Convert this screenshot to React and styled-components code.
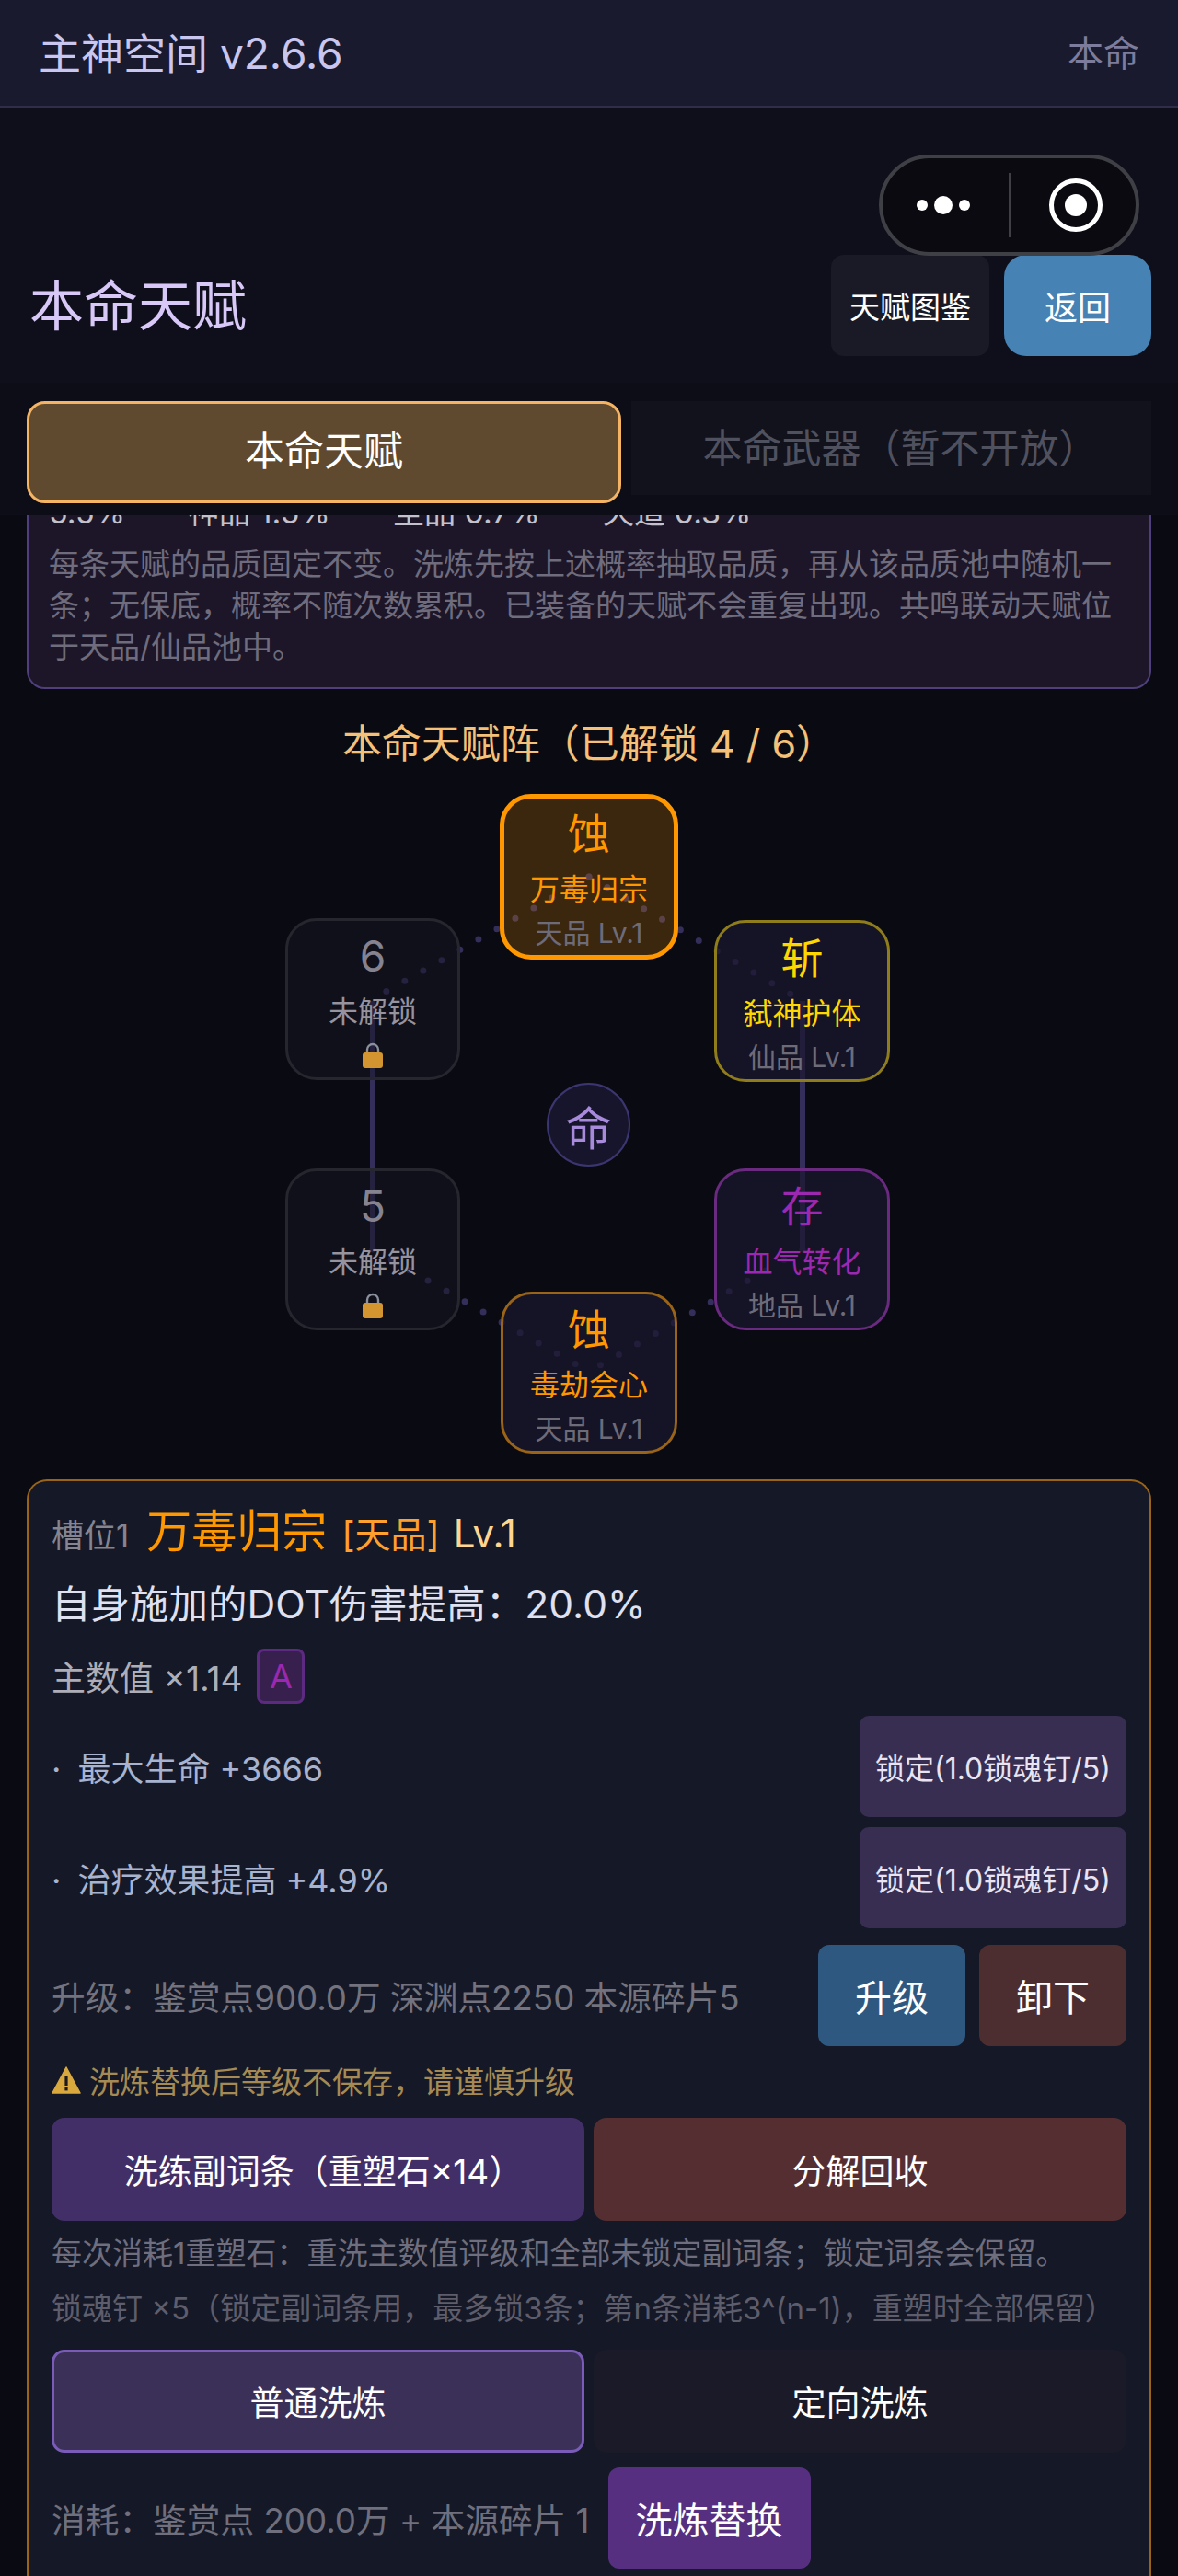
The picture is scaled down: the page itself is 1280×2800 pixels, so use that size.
import React from "react";
import styled, { createGlobalStyle } from "styled-components";

const GlobalStyle = createGlobalStyle`
  html, body {
    margin: 0;
    padding: 0;
    background: #0a0a12;
  }
  * {
    box-sizing: border-box;
  }
`;

const Page = styled.div`
  position: relative;
  height: 2800px;
  overflow: hidden;
  background: #0a0a12;
  font-family: "Inter", "Noto Sans CJK SC", sans-serif;
  font-weight: 400;
`;

const TopBar = styled.header`
  display: flex;
  align-items: center;
  justify-content: space-between;
  height: 117px;
  padding: 0 42px 6px;
  background: #1a1a2e;
  border-bottom: 2px solid #2f2d4a;
`;

const AppName = styled.div`
  font-size: 46px;
  color: #c9c6f0;
`;

const PageTag = styled.div`
  font-size: 39px;
  color: #7d7c9c;
`;

const Hero = styled.div`
  background: #0e0f1b;
  padding: 160px 29px 29px;
`;

const TitleRow = styled.div`
  display: flex;
  align-items: center;
  justify-content: space-between;
`;

const Title = styled.h1`
  margin: 0 0 8px 3px;
  font-size: 59px;
  font-weight: 400;
  color: #d8c8f8;
`;

const TitleActions = styled.div`
  display: flex;
  gap: 16px;
`;

const HeadButton = styled.button`
  width: ${(p) => (p.$primary ? "160px" : "172px")};
  height: 110px;
  padding: 0;
  border: none;
  border-radius: ${(p) => (p.$primary ? "24px" : "14px")};
  background: ${(p) => (p.$primary ? "#4682b4" : "#1a1a26")};
  color: #fff;
  font-family: inherit;
  font-size: ${(p) => (p.$primary ? "36px" : "33px")};
`;

const Capsule = styled.div`
  position: absolute;
  top: 168px;
  left: 955px;
  width: 283px;
  height: 110px;
`;

const TabBar = styled.div`
  position: relative;
  z-index: 2;
  display: flex;
  align-items: flex-start;
  gap: 11px;
  height: 144px;
  padding: 20px 29px 0;
  background: #0c0d16;
`;

const Tab = styled.div`
  flex: ${(p) => (p.$active ? "0 0 646px" : "1")};
  height: ${(p) => (p.$active ? "111px" : "102px")};
  padding: ${(p) => (p.$active ? "0 0 10px" : "0 0 6px 20px")};
  display: flex;
  align-items: center;
  justify-content: center;
  border: ${(p) => (p.$active ? "3px solid #f5b463" : "none")};
  border-radius: ${(p) => (p.$active ? "20px" : "0")};
  background: ${(p) => (p.$active ? "#5f4a30" : "#11121c")};
  color: ${(p) => (p.$active ? "#fff" : "#50515f")};
  font-size: 43px;
`;

const InfoPanel = styled.section`
  margin: -40px 29px 0;
  padding: 12px 22px 0;
  height: 229px;
  background: #1c1628;
  border: 2px solid #4f3f7c;
  border-radius: 0 0 20px 20px;
`;

const RateRow = styled.div`
  display: flex;
  gap: 68px;
  margin-bottom: 11px;
  font-size: 34px;
  line-height: 46px;
  color: #c3c2cc;
`;

const InfoText = styled.p`
  margin: 0;
  font-size: 33px;
  line-height: 45px;
  color: #6f6c7e;
`;

const FormationTitle = styled.h2`
  margin: 34px 0 0;
  height: 50px;
  line-height: 50px;
  text-align: center;
  font-size: 43px;
  font-weight: 400;
  color: #f5c078;
`;

const Formation = styled.div`
  position: relative;
  margin-top: 3px;
  height: 744px;
`;

const Links = styled.svg`
  position: absolute;
  inset: 0;
`;

const Slot = styled.div`
  position: absolute;
  left: ${(p) => p.$x}px;
  top: ${(p) => p.$y}px;
  width: ${(p) => p.$w}px;
  height: ${(p) => p.$h}px;
  display: flex;
  flex-direction: column;
  align-items: center;
  border: ${(p) => p.$bw}px solid ${(p) => p.$border};
  border-radius: 34px;
  background: ${(p) => p.$bg};
  color: ${(p) => p.$color};
`;

const SlotGlyph = styled.div`
  font-size: 46px;
  line-height: 66px;
  margin-top: 5px;
`;

const SlotName = styled.div`
  font-size: 32px;
  line-height: 44px;
  margin-top: 6px;
`;

const SlotGrade = styled.div`
  font-size: 30px;
  line-height: 44px;
  margin-top: 3px;
  color: #6e6b79;
`;

const LockedGlyph = styled(SlotGlyph)`
  color: #85838f;
`;

const LockedName = styled(SlotName)`
  color: #96939f;
  margin-bottom: 11px;
`;

const CoreBadge = styled.div`
  position: absolute;
  left: 594px;
  top: 341px;
  width: 91px;
  height: 91px;
  display: flex;
  align-items: center;
  justify-content: center;
  border: 2px solid #3b3670;
  border-radius: 50%;
  background: #17152b;
  color: #a78bda;
  font-size: 50px;
`;

const DetailCard = styled.section`
  margin: 28px 29px 0;
  height: 1300px;
  padding: 24px 25px 0;
  background: #151826;
  border: 2px solid #9a6418;
  border-bottom: none;
  border-radius: 22px 22px 0 0;
`;

const NameRow = styled.div`
  display: flex;
  align-items: baseline;
  height: 62px;
  line-height: 62px;
`;

const SlotLabel = styled.span`
  font-size: 35px;
  color: #85858f;
  margin-right: 19px;
`;

const TalentName = styled.span`
  font-size: 49px;
  color: #ff9800;
  margin-right: 16px;
`;

const GradeTag = styled.span`
  font-size: 39px;
  color: #ff9f2e;
  margin-right: 15px;
`;

const LevelTag = styled.span`
  font-size: 42px;
  color: #ffd591;
`;

const Effect = styled.div`
  margin-top: 20px;
  height: 56px;
  line-height: 56px;
  font-size: 42.5px;
  color: #dfe0f0;
`;

const MultiplierRow = styled.div`
  display: flex;
  align-items: center;
  gap: 16px;
  margin-top: 20px;
  height: 60px;
  font-size: 37px;
  color: #aeaeb8;
`;

const RankBadge = styled.span`
  display: flex;
  align-items: center;
  justify-content: center;
  width: 52px;
  height: 60px;
  border: 3px solid #5c2a80;
  border-radius: 8px;
  background: #37204e;
  color: #9c27b0;
  font-size: 36px;
`;

const AffixList = styled.div`
  display: flex;
  flex-direction: column;
  gap: 11px;
  margin-top: 13px;
`;

const AffixRow = styled.div`
  display: flex;
  align-items: center;
  justify-content: space-between;
  font-size: 36px;
  color: #a8b3cf;
`;

const AffixDot = styled.span`
  margin-right: 18px;
`;

const LockButton = styled.button`
  width: 290px;
  height: 110px;
  padding: 0;
  border: none;
  border-radius: 10px;
  background: #372e52;
  color: #e8e4f2;
  font-family: inherit;
  font-size: 32px;
`;

const UpgradeRow = styled.div`
  display: flex;
  align-items: center;
  gap: 15px;
  margin-top: 18px;
`;

const MutedLine = styled.div`
  flex: 1;
  font-size: 36.7px;
  color: #73737f;
`;

const SmallAction = styled.button`
  width: 160px;
  height: 110px;
  padding: 0;
  border: none;
  border-radius: 12px;
  background: ${(p) => p.$bg};
  color: #fff;
  font-family: inherit;
  font-size: 40px;
`;

const Warning = styled.div`
  display: flex;
  align-items: center;
  gap: 9px;
  margin-top: 14px;
  height: 46px;
  font-size: 33px;
  color: #a68a54;
`;

const ButtonPair = styled.div`
  display: grid;
  grid-template-columns: 1fr 1fr;
  gap: 10px;
  margin-top: ${(p) => p.$top}px;
`;

const WideButton = styled.button`
  height: 112px;
  padding: ${(p) => (p.$offset ? "0 0 0 12px" : "0")};
  border: ${(p) => (p.$outlined ? "3px solid #7a5cb8" : "none")};
  border-radius: 14px;
  background: ${(p) => p.$bg};
  color: #fff;
  font-family: inherit;
  font-size: 37px;
`;

const Note = styled.p`
  margin: ${(p) => p.$top}px 0 0;
  height: 46px;
  line-height: 46px;
  font-size: 33px;
  white-space: nowrap;
  color: ${(p) => p.$color};
`;

const CostRow = styled.div`
  display: flex;
  align-items: center;
  gap: 20px;
  margin-top: 16px;
  font-size: 36.7px;
  color: #6f6f7d;
`;

const RerollButton = styled.button`
  width: 220px;
  height: 110px;
  padding: 0;
  border: none;
  border-radius: 12px;
  background: #562f80;
  color: #fff;
  font-family: inherit;
  font-size: 40px;
`;

const LockIcon = () => (
  <svg width="24" height="28" viewBox="0 0 24 28">
    <path d="M6 12V8a6 6 0 0 1 12 0v4" fill="none" stroke="#8b919c" strokeWidth="2.4" />
    <rect x="1" y="11" width="22" height="17" rx="3" fill="#d3952f" />
  </svg>
);

const WarnIcon = () => (
  <svg width="32" height="30" viewBox="0 0 32 30">
    <path d="M16 1 L31 29 H1 Z" fill="#d9a93e" stroke="#d9a93e" strokeWidth="1.5" strokeLinejoin="round" />
    <rect x="14.4" y="10" width="3.2" height="11" fill="#1a1a20" />
    <rect x="14.4" y="23" width="3.2" height="3.4" fill="#1a1a20" />
  </svg>
);

const slots = [
  { x: 543, y: 27, w: 194, h: 180, bw: 5, border: "#ff9800", bg: "rgba(255,152,0,0.2)", color: "#ff9800", glyph: "蚀", name: "万毒归宗", grade: "天品 Lv.1" },
  { x: 776, y: 164, w: 191, h: 176, bw: 3, border: "#8f7d1c", bg: "rgba(26,24,46,0.72)", color: "#ffd700", glyph: "斩", name: "弑神护体", grade: "仙品 Lv.1" },
  { x: 776, y: 434, w: 191, h: 176, bw: 3, border: "#6a2a80", bg: "rgba(26,24,46,0.72)", color: "#9c27b0", glyph: "存", name: "血气转化", grade: "地品 Lv.1" },
  { x: 544, y: 568, w: 192, h: 176, bw: 3, border: "#9a6418", bg: "rgba(26,24,46,0.72)", color: "#ff9800", glyph: "蚀", name: "毒劫会心", grade: "天品 Lv.1" },
];

const lockedSlots = [
  { x: 310, y: 434, n: "5" },
  { x: 310, y: 162, n: "6" },
];

const solidLinks = [
  [872, 252, 872, 522],
  [405, 252, 405, 522],
];

const dottedLinks = [
  [640, 117, 872, 252],
  [640, 117, 405, 250],
  [872, 522, 640, 655],
  [405, 522, 640, 655],
];

const App = () => {
  return (
    <Page>
      <GlobalStyle />
      <TopBar>
        <AppName>主神空间 v2.6.6</AppName>
        <PageTag>本命</PageTag>
      </TopBar>

      <Hero>
        <TitleRow>
          <Title>本命天赋</Title>
          <TitleActions>
            <HeadButton>天赋图鉴</HeadButton>
            <HeadButton $primary>返回</HeadButton>
          </TitleActions>
        </TitleRow>
      </Hero>

      <Capsule>
        <svg width="283" height="110" viewBox="0 0 283 110">
          <rect x="2" y="2" width="279" height="106" rx="53" fill="#0b0a10" stroke="#3f3f46" strokeWidth="4" />
          <circle cx="47" cy="55" r="6" fill="#fff" />
          <circle cx="70" cy="55" r="10" fill="#fff" />
          <circle cx="93" cy="55" r="6" fill="#fff" />
          <rect x="141" y="20" width="3" height="70" fill="#3f3f46" />
          <circle cx="214" cy="55" r="26.5" fill="none" stroke="#fff" strokeWidth="5" />
          <circle cx="214" cy="55" r="12" fill="#fff" />
        </svg>
      </Capsule>

      <TabBar>
        <Tab $active>本命天赋</Tab>
        <Tab>本命武器（暂不开放）</Tab>
      </TabBar>

      <InfoPanel>
        <RateRow>
          <span>5.5%</span>
          <span>神品 1.5%</span>
          <span>圣品 0.7%</span>
          <span>天道 0.3%</span>
        </RateRow>
        <InfoText>
          每条天赋的品质固定不变。洗炼先按上述概率抽取品质，再从该品质池中随机一条；无保底，概率不随次数累积。已装备的天赋不会重复出现。共鸣联动天赋位于天品/仙品池中。
        </InfoText>
      </InfoPanel>

      <FormationTitle>本命天赋阵（已解锁 4 / 6）</FormationTitle>

      <Formation>
        <Links width="1280" height="744" viewBox="0 0 1280 744">
          {solidLinks.map(([x1, y1, x2, y2], i) => (
            <line key={i} x1={x1} y1={y1} x2={x2} y2={y2} stroke="#332e5a" strokeWidth="6" />
          ))}
          {dottedLinks.map(([x1, y1, x2, y2], i) => (
            <line
              key={i}
              x1={x1}
              y1={y1}
              x2={x2}
              y2={y2}
              stroke="#332e5a"
              strokeWidth="7"
              strokeLinecap="round"
              strokeDasharray="0 23"
            />
          ))}
        </Links>

        {slots.map((s) => (
          <Slot key={s.name} $x={s.x} $y={s.y} $w={s.w} $h={s.h} $bw={s.bw} $border={s.border} $bg={s.bg} $color={s.color}>
            <SlotGlyph>{s.glyph}</SlotGlyph>
            <SlotName>{s.name}</SlotName>
            <SlotGrade>{s.grade}</SlotGrade>
          </Slot>
        ))}

        {lockedSlots.map((s) => (
          <Slot key={s.n} $x={s.x} $y={s.y} $w={190} $h={176} $bw={3} $border="#26262e" $bg="rgba(22,22,34,0.5)" $color="#85838f">
            <LockedGlyph>{s.n}</LockedGlyph>
            <LockedName>未解锁</LockedName>
            <LockIcon />
          </Slot>
        ))}

        <CoreBadge>命</CoreBadge>
      </Formation>

      <DetailCard>
        <NameRow>
          <SlotLabel>槽位1</SlotLabel>
          <TalentName>万毒归宗</TalentName>
          <GradeTag>[天品]</GradeTag>
          <LevelTag>Lv.1</LevelTag>
        </NameRow>
        <Effect>自身施加的DOT伤害提高：20.0%</Effect>
        <MultiplierRow>
          主数值 ×1.14
          <RankBadge>A</RankBadge>
        </MultiplierRow>

        <AffixList>
          <AffixRow>
            <span><AffixDot>·</AffixDot>最大生命 +3666</span>
            <LockButton>锁定(1.0锁魂钉/5)</LockButton>
          </AffixRow>
          <AffixRow>
            <span><AffixDot>·</AffixDot>治疗效果提高 +4.9%</span>
            <LockButton>锁定(1.0锁魂钉/5)</LockButton>
          </AffixRow>
        </AffixList>

        <UpgradeRow>
          <MutedLine>升级：鉴赏点900.0万 深渊点2250 本源碎片5</MutedLine>
          <SmallAction $bg="#2f5880">升级</SmallAction>
          <SmallAction $bg="#4d2e30">卸下</SmallAction>
        </UpgradeRow>

        <Warning>
          <WarnIcon />
          洗炼替换后等级不保存，请谨慎升级
        </Warning>

        <ButtonPair $top={18}>
          <WideButton $offset $bg="#432f68">洗练副词条（重塑石×14）</WideButton>
          <WideButton $bg="#552e32">分解回收</WideButton>
        </ButtonPair>

        <Note $top={12} $color="#6e6e7e">每次消耗1重塑石：重洗主数值评级和全部未锁定副词条；锁定词条会保留。</Note>
        <Note $top={14} $color="#5d5d6c">锁魂钉 ×5（锁定副词条用，最多锁3条；第n条消耗3^(n-1)，重塑时全部保留）</Note>

        <ButtonPair $top={22}>
          <WideButton $outlined $bg="#3b3058">普通洗炼</WideButton>
          <WideButton $bg="#1a1a28">定向洗炼</WideButton>
        </ButtonPair>

        <CostRow>
          消耗：鉴赏点 200.0万 + 本源碎片 1
          <RerollButton>洗炼替换</RerollButton>
        </CostRow>
      </DetailCard>
    </Page>
  );
};

export default App;
